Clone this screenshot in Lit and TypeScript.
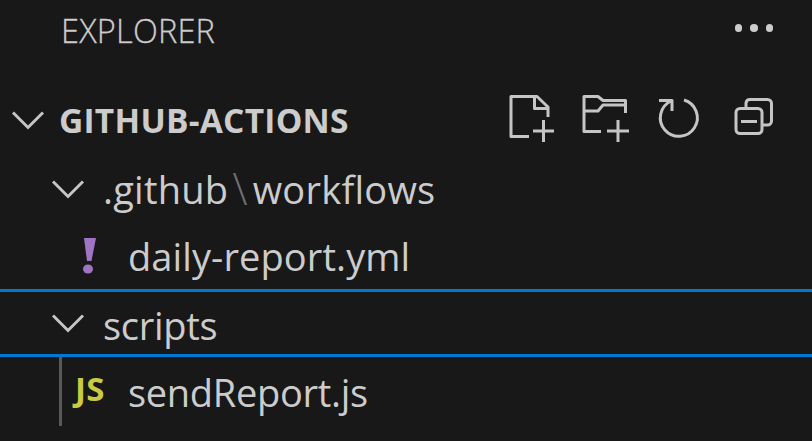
import { LitElement, html, css, svg } from "lit";
import { customElement } from "lit/decorators.js";

const chevron = html`<svg class="chev" viewBox="0 0 34 20"><path d="M2 2.500L17 17.500L32 2.500"/></svg>`;

const tool = (x: number, body: unknown) =>
  html`<svg class="tool" viewBox="${x} 93 48 51">${body}</svg>`;

@customElement("app-root")
export class AppRoot extends LitElement {
  static styles = css`
    :host {
      display: block;
      width: 812px;
      height: 441px;
      background: #181818;
      color: #cccccc;
      font-family: "Open Sans", "Noto Sans", sans-serif;
      overflow: hidden;
    }
    .title {
      display: flex;
      align-items: center;
      height: 60px;
      padding: 0 39px 0 61px;
      justify-content: space-between;
      font-size: 32.500px;
      letter-spacing: 0.200px;
      font-weight: 300;
      margin-bottom: 26px;
      -webkit-text-stroke: 0.300px #cccccc;
    }
    .dots { display: flex; gap: 8px; margin-top: -4px; }
    .dots i { width: 7.500px; height: 7.500px; border-radius: 50%; background: #cccccc; display: block; }
    .row {
      display: flex;
      align-items: center;
      box-sizing: border-box;
      height: 68px;
      white-space: nowrap;
      font-size: 38px;
      letter-spacing: 0.100px;
    }
    .chev { width: 34px; height: 20px; flex: none; fill: none; stroke: #c5c5c5; stroke-width: 3; }
    .root { padding-left: 11px; font-weight: 700; font-size: 33.500px; letter-spacing: 0.250px; }
    .root .label { margin-left: 14px; }
    .folder { padding-left: 51px; }
    .folder .label { margin-left: 18px; }
    .sep { color: #6f6f6f; font-weight: 300; font-size: 44px; line-height: 40px; margin: 0 5px 0 4px; vertical-align: -1px; }
    .wide { letter-spacing: 0.250px; }
    .tools { display: flex; gap: 25px; margin-left: auto; padding-right: 37px; margin-top: -3px; }
    .tool { width: 48px; height: 51px; fill: none; stroke: #c5c5c5; stroke-width: 3; stroke-linejoin: round; }
    .file { padding-left: 128px; }
    .scripts { border-top: 3px solid #0078d4; border-bottom: 3px solid #0078d4; }
    .scripts .label { margin-top: 3px; letter-spacing: -0.300px; }
    .children { margin-left: 59px; border-left: 3px solid #585858; }
    .children .file { padding-left: 12px; height: 69px; letter-spacing: -0.300px; }
    .bang { width: 16px; height: 36px; flex: none; margin: 0 31px 0 -47px; }
    .bang path, .bang ellipse { fill: #a074c4; }
    .js {
      width: 37px;
      flex: none;
      font-size: 33px;
      font-weight: 700;
      letter-spacing: 0.300px;
      color: #cbcb41;
      margin-left: 1px;
      margin-right: 16px;
      margin-top: -6px;
    }
    .h69 { height: 69px; }
    .h66 { height: 66px; }
  `;

  render() {
    return html`
      <div class="title"><span>EXPLORER</span><span class="dots"><i></i><i></i><i></i></span></div>
      <div class="row root">
        ${chevron}<span class="label">GITHUB-ACTIONS</span>
        <div class="tools">
          ${tool(508, svg`<path d="M529 136.500H511V96.500H537L548 107V117M534.500 96.500V108.500H548M533 131H554M543.500 120V142"/>`)}
          ${tool(581, svg`<path d="M601 131.500H584V96.500H598L603 100.500H625.500V113M584 111H598L603 105H625.500M607 131H629M618 120V142"/>`)}
          ${tool(654, svg`<path d="M684 100A18.500 18.500 0 1 1 671 101M659 100.500H672V111"/>`)}
          ${tool(727, svg`<rect x="736" y="108.500" width="26" height="25" rx="4"/><path d="M746 108V103A4 4 0 0 1 750 99.500H767.500A4 4 0 0 1 771.500 103.500V121A4 4 0 0 1 767.500 125H762M741 121.500H757"/>`)}
        </div>
      </div>
      <div class="row folder h69">
        ${chevron}<span class="label wide">.github<span class="sep">\\</span>workflows</span>
      </div>
      <div class="row file h66">
        <svg class="bang" viewBox="0 0 16 36"><path d="M3 0H15L10.500 23H6Z"/><ellipse cx="7" cy="31" rx="5" ry="4.500"/></svg>
        <span>daily-report.yml</span>
      </div>
      <div class="row folder scripts">${chevron}<span class="label">scripts</span></div>
      <div class="children">
        <div class="row file"><span class="js">JS</span><span>sendReport.js</span></div>
      </div>
    `;
  }
}
